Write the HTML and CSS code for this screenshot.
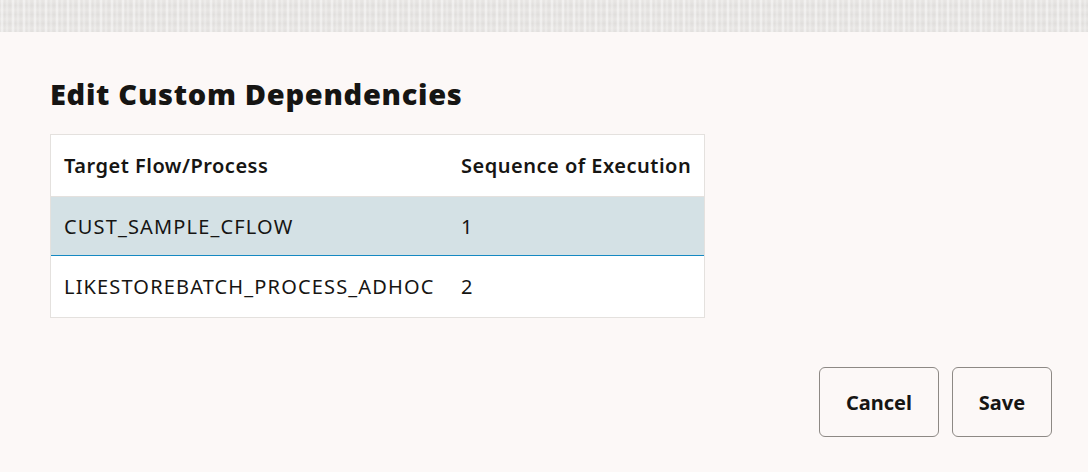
FILE: index.html
```html
<!DOCTYPE html>
<html>
<head>
<meta charset="utf-8">
<link rel="stylesheet" href="styles.css">
</head>
<body>
<div class="backdrop"></div>
<div class="dialog">
  <h1 class="title">Edit Custom Dependencies</h1>
  <table class="grid">
    <colgroup><col class="col1"><col class="col2"></colgroup>
    <thead>
      <tr><th>Target Flow/Process</th><th>Sequence of Execution</th></tr>
    </thead>
    <tbody>
      <tr class="selected"><td>CUST_SAMPLE_CFLOW</td><td>1</td></tr>
      <tr><td>LIKESTOREBATCH_PROCESS_ADHOC</td><td>2</td></tr>
    </tbody>
  </table>
  <div class="footer">
    <button class="btn cancel">Cancel</button>
    <button class="btn save">Save</button>
  </div>
</div>
</body>
</html>
```

FILE: styles.css
```css
html, body {
  margin: 0;
  padding: 0;
  background: #fcf8f7;
  font-family: "Noto Sans", "Open Sans", sans-serif;
  color: #161513;
}
.backdrop {
  height: 32px;
  background-color: #e8e6e4;
  background-image:
    repeating-linear-gradient(90deg, rgba(255,255,255,0) 0px, rgba(255,255,255,0.6) 2px, rgba(255,255,255,0) 4px, rgba(255,255,255,0) 5px, rgba(255,255,255,0.35) 7px, rgba(255,255,255,0) 9px, rgba(255,255,255,0) 11px),
    repeating-linear-gradient(0deg, rgba(0,0,0,0.03) 0px, rgba(0,0,0,0) 4px, rgba(0,0,0,0.04) 9px);
}
.dialog {
  padding: 42px 36px 0 50px;
}
.title {
  margin: 0;
  font-size: 29px;
  font-weight: 900;
  line-height: 40px;
  letter-spacing: 0.7px;
  font-family: "Noto Sans", sans-serif;
}
.grid {
  margin-top: 20px;
  width: 655px;
  table-layout: fixed;
  border-collapse: separate;
  border-spacing: 0;
  background: #ffffff;
  border: 1px solid #e4e1de;
  font-size: 20px;
  letter-spacing: 1.15px;
  white-space: nowrap;
}
.col1 { width: 397px; }
.col2 { width: 256px; }
.grid th {
  text-align: left;
  font-weight: 600;
  height: 61px;
  padding: 0 0 0 13px;
  border-bottom: 1px solid #e4e1de;
  letter-spacing: 0.5px;
}
.grid td {
  height: 59px;
  padding: 0 0 0 13px;
  border-bottom: 1px solid #e4e1de;
}
.grid tr.selected td {
  background: #d4e1e5;
  height: 59px;
  border-bottom: none;
  box-shadow: inset 0 -1px 0 #1589c2;
}
.grid tbody tr:last-child td { border-bottom: none; height: 61px; }
.footer {
  display: flex;
  justify-content: flex-end;
  gap: 13px;
  margin-top: 49px;
}
.btn {
  height: 70px;
  border: 1px solid #8d8985;
  border-radius: 6px;
  background: #fcf8f7;
  font-family: "Noto Sans", sans-serif;
  font-size: 20px;
  font-weight: 700;
  color: #161513;
  padding: 0 25px;
}
.cancel { width: 120px; }
.save { width: 100px; }
```
